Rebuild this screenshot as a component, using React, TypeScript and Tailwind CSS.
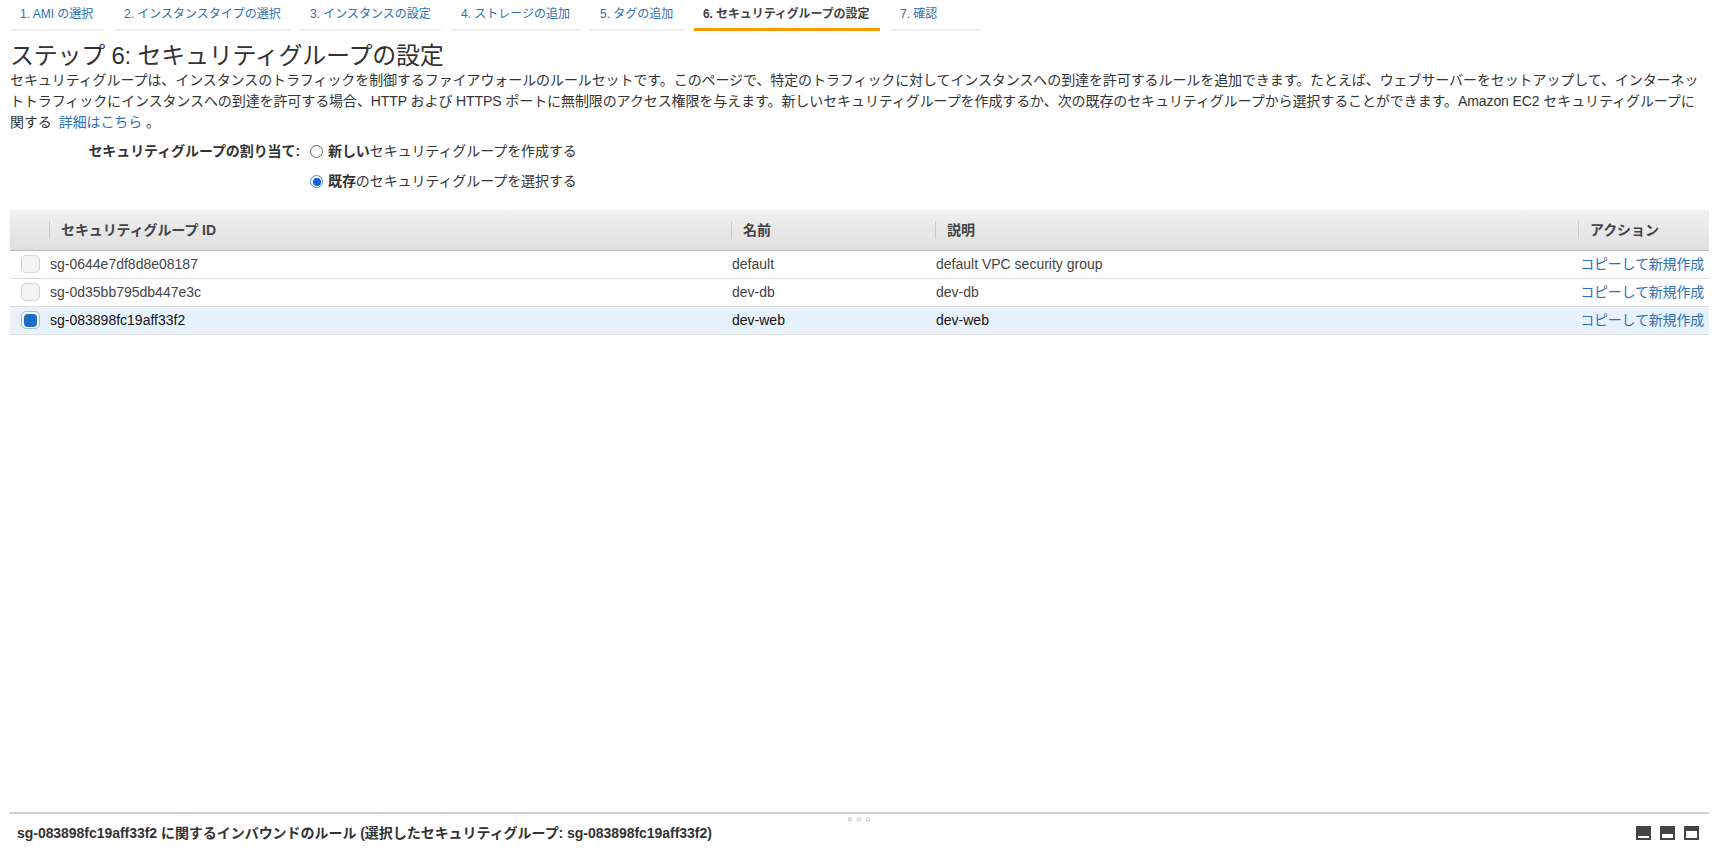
const FONT = "font-['Liberation_Sans','Noto_Sans_CJK_JP',sans-serif]";

const tabs = [
  { label: "1. AMI の選択", w: "w-[94px]" },
  { label: "2. インスタンスタイプの選択", w: "w-[176px]" },
  { label: "3. インスタンスの設定", w: "w-[141px]" },
  { label: "4. ストレージの追加", w: "w-[129px]" },
  { label: "5. タグの追加", w: "w-[94px]" },
  { label: "6. セキュリティグループの設定", w: "w-[186px]", active: true },
  { label: "7. 確認", w: "w-[90px]" },
];

const rows = [
  { id: "sg-0644e7df8d8e08187", name: "default", desc: "default VPC security group" },
  { id: "sg-0d35bb795db447e3c", name: "dev-db", desc: "dev-db" },
  { id: "sg-083898fc19aff33f2", name: "dev-web", desc: "dev-web", selected: true },
];

const COLS = "grid grid-cols-[40px_682px_204px_643px_130px]";

function HeaderCell({ label }: { label: string }) {
  return (
    <div className="flex items-center h-full">
      <div className="w-px h-[18px] bg-[#c8c8c8] -ml-px" />
      <span className="pl-[11px] pt-[1px] text-[14px] font-bold text-[#444] tracking-[-0.1px]">{label}</span>
    </div>
  );
}

function PanelIcon({ fill }: { fill: number }) {
  return (
    <svg width="15" height="14" viewBox="0 0 15 14">
      <rect width="15" height="14" fill="#444" />
      <rect x="2" y={12 - fill} width="11" height={fill} fill="#fff" />
    </svg>
  );
}

export default function App() {
  return (
    <div className={`${FONT} w-full h-[852px] bg-white flex flex-col pl-[10px] pr-[11px] text-[#444] overflow-hidden`}>
      <div className="flex gap-[10px] h-[31px]">
        {tabs.map((t) => (
          <div
            key={t.label}
            className={`${t.w} h-[30.5px] pt-[6px] text-[12px] leading-[17px] whitespace-nowrap ${
              t.active ? "pl-[9px] border-b-[3px] border-[#f90] font-bold text-[#444] tracking-[-0.1px]" : "pl-[10px] border-b-2 border-[#eeeeee] text-[#2e6fb5]"
            }`}
          >
            {t.label}
          </div>
        ))}
      </div>
      <h1 className="mt-[10px] text-[24px] leading-[29px] font-normal text-[#333] tracking-[-0.24px]">
        ステップ 6: セキュリティグループの設定
      </h1>
      <p className="text-[14px] leading-[21.2px] text-[#333] tracking-[-0.09px] pr-[4px]">
        セキュリティグループは、インスタンスのトラフィックを制御するファイアウォールのルールセットです。このページで、特定のトラフィックに対してインスタンスへの到達を許可するルールを追加できます。たとえば、ウェブサーバーをセットアップして、インターネットトラフィックにインスタンスへの到達を許可する場合、HTTP および HTTPS ポートに無制限のアクセス権限を与えます。新しいセキュリティグループを作成するか、次の既存のセキュリティグループから選択することができます。Amazon EC2 セキュリティグループに関する
        <span className="text-[#2e6fb5] ml-[7px]">詳細はこちら</span> 。
      </p>
      <div className="mt-[2px] flex tracking-[-0.09px]">
        <div className="w-[290px] text-right text-[14px] font-bold leading-[31px] text-[#333]">セキュリティグループの割り当て:</div>
        <div className="ml-[10px] flex flex-col">
          <div className="flex items-center h-[31px] text-[14px] text-[#333]">
            <span className="w-[13px] h-[13px] rounded-full border border-[#666] bg-white" />
            <span className="ml-[5px]"><b>新しい</b>セキュリティグループを作成する</span>
          </div>
          <div className="flex items-center h-[30px] text-[14px] text-[#333]">
            <span className="w-[13px] h-[13px] rounded-full border-[1.5px] border-[#3b8bf0] bg-white flex items-center justify-center">
              <span className="w-[8px] h-[8px] rounded-full bg-[#0b62d6]" />
            </span>
            <span className="ml-[5px]"><b>既存</b>のセキュリティグループを選択する</span>
          </div>
        </div>
      </div>
      <div className="mt-[13px]">
        <div className={`${COLS} h-[41px] bg-gradient-to-b from-[#f0f0f0] to-[#e0e0e0] border-b border-[#bbb]`}>
          <div />
          <HeaderCell label="セキュリティグループ ID" />
          <HeaderCell label="名前" />
          <HeaderCell label="説明" />
          <HeaderCell label="アクション" />
        </div>
        {rows.map((r) => (
          <div
            key={r.id}
            className={`${COLS} h-[28px] items-center border-b border-[#ddd] text-[14px] ${
              r.selected ? "bg-[#e8f2fc] text-[#111]" : "bg-white text-[#444]"
            }`}
          >
            <div className="pl-[11px] flex items-center">
              <span
                className={`w-[19px] h-[18px] rounded-[5px] border flex items-center justify-center bg-[#f4f4f4] ${
                  r.selected ? "border-[#bbb]" : "border-[#d5d5d5]"
                }`}
              >
                {r.selected && <span className="w-[13px] h-[13px] rounded-[4px] bg-[#1b6ec2]" />}
              </span>
            </div>
            <div className="pt-[1px]">{r.id}</div>
            <div className="pt-[1px]">{r.name}</div>
            <div className="pt-[1px]">{r.desc}</div>
            <div className="text-right pr-[5px] text-[14px] tracking-[-0.2px] text-[#2e6fb5] whitespace-nowrap">コピーして新規作成</div>
          </div>
        ))}
      </div>
      <div className="mt-auto h-[40px] border-t-2 border-[#d0d0d0] flex flex-col relative">
        <svg className="absolute left-[837px] top-[3px]" width="26" height="5" viewBox="0 0 26 5" fill="none" stroke="#bbb">
          <circle cx="3" cy="2.5" r="1.6" />
          <circle cx="12" cy="2.5" r="1.6" />
          <circle cx="21" cy="2.5" r="1.6" />
        </svg>
        <div className="flex items-center justify-between pt-[8px] pl-[7px] pr-[10px]">
          <span className="text-[14px] font-bold text-[#333] leading-[22px] tracking-[-0.04px]">
            sg-083898fc19aff33f2 に関するインバウンドのルール (選択したセキュリティグループ: sg-083898fc19aff33f2)
          </span>
          <div className="flex gap-[9px]">
            <PanelIcon fill={2} />
            <PanelIcon fill={4} />
            <PanelIcon fill={7} />
          </div>
        </div>
      </div>
    </div>
  );
}
